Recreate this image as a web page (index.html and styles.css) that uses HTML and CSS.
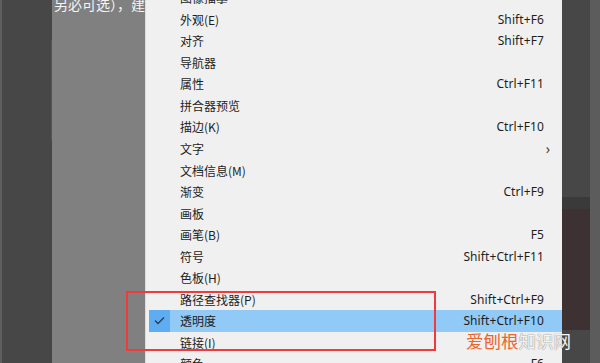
FILE: index.html
```html
<!DOCTYPE html>
<html lang="zh-CN">
<head>
    <meta charset="UTF-8">
    <title>窗口菜单</title>
    <link rel="stylesheet" href="styles.css">
</head>
<body>

<!-- 左侧工具栏 -->
<div class="edge"></div>
<div class="dock"><div class="dock-line"></div></div>

<!-- 画布区域 -->
<div class="canvas">
    <p class="canvas-text">另必可选），建立</p>
</div>

<!-- 窗口菜单 -->
<ul class="menu">
    <li class="item"><span class="label">图像描摹</span></li>
    <li class="item"><span class="label">外观(E)</span><span class="key">Shift+F6</span></li>
    <li class="item"><span class="label">对齐</span><span class="key">Shift+F7</span></li>
    <li class="item"><span class="label">导航器</span></li>
    <li class="item"><span class="label">属性</span><span class="key">Ctrl+F11</span></li>
    <li class="item"><span class="label">拼合器预览</span></li>
    <li class="item"><span class="label">描边(K)</span><span class="key">Ctrl+F10</span></li>
    <li class="item"><span class="label">文字</span><span class="arrow">›</span></li>
    <li class="item"><span class="label">文档信息(M)</span></li>
    <li class="item"><span class="label">渐变</span><span class="key">Ctrl+F9</span></li>
    <li class="item"><span class="label">画板</span></li>
    <li class="item"><span class="label">画笔(B)</span><span class="key">F5</span></li>
    <li class="item"><span class="label">符号</span><span class="key">Shift+Ctrl+F11</span></li>
    <li class="item"><span class="label">色板(H)</span></li>
    <li class="item"><span class="label">路径查找器(P)</span><span class="key">Shift+Ctrl+F9</span></li>
    <li class="item active">
        <span class="check">
            <svg width="11" height="9" viewBox="0 0 11 9"><polyline points="1,4.5 4,7.5 10,1.5" fill="none" stroke="#2f3d4c" stroke-width="1.3"/></svg>
        </span>
        <span class="label">透明度</span><span class="key">Shift+Ctrl+F10</span>
    </li>
    <li class="item"><span class="label">链接(I)</span></li>
    <li class="item"><span class="label">颜色</span><span class="key">F6</span></li>
</ul>

<!-- 右侧背景 -->
<div class="backdrop">
    <div class="backdrop-dark">
        <div class="band"></div>
    </div>
    <div class="backdrop-edge"></div>
</div>

<!-- 标注框 -->
<div class="mark"></div>

<!-- 水印 -->
<div class="watermark"><span class="wm-a">爱刨根</span><span class="wm-b">知识网</span></div>

</body>
</html>
```

FILE: styles.css
```css
/* 全局 */
body {
    margin: 0;
    width: 600px;
    height: 363px;
    overflow: hidden;
    display: flex;
    position: relative;
    background: #474747;
    font-family: "Noto Sans", "Noto Sans CJK SC", sans-serif;
}

/* 左侧 */
.edge {
    width: 2px;
    background: #5e5e5e;
}
.dock {
    width: 50px;
    background: #474747;
    display: flex;
    justify-content: flex-end;
}
.dock-line {
    width: 1px;
    height: 100px;
    margin-top: 40px;
    background: #555555;
}
.canvas {
    width: 93px;
    background: #808080;
    overflow: hidden;
}
.canvas-text {
    margin: -6px 0 0 2px;
    white-space: nowrap;
    color: #f4f4f4;
    font-size: 14px;
    font-family: "Noto Sans CJK SC", sans-serif;
}

/* 菜单 */
.menu {
    list-style: none;
    margin: -13px 0 0;
    padding: 0 0 0 3px;
    width: 413px;
    background: #f0f0f0;
    border-left: 1px solid #dcdcdc;
    flex-shrink: 0;
}
.item {
    display: flex;
    align-items: center;
    height: 21.54px;
    padding: 0 18px 0 31px;
    color: #1e1e1e;
    font-size: 12px;
    position: relative;
}
.label {
    flex: 1;
    font-family: "Noto Sans CJK SC", sans-serif;
    font-size: 12px;
}
.key {
    font-family: "Noto Sans", sans-serif;
    font-size: 12px;
    letter-spacing: 0.1px;
}
.arrow {
    font-size: 14px;
    color: #444;
    margin-right: -6px;
}
.item.active {
    background: #91c9f7;
}
.check {
    position: absolute;
    left: 0;
    top: 0;
    width: 21px;
    height: 100%;
    background: #5eacf2;
    display: flex;
    align-items: center;
    justify-content: center;
}

/* 右侧 */
.backdrop {
    flex: 1;
    display: flex;
}
.backdrop-dark {
    width: 28px;
    background: #474747;
    padding-top: 197px;
}
.band {
    height: 133px;
    background: #3e3131;
    border-top: 12px solid #3a3a3a;
    box-sizing: border-box;
}
.backdrop-edge {
    flex: 1;
    background: #5c5c5c;
}

/* 红色标注 */
.mark {
    position: absolute;
    left: 126px;
    top: 291px;
    width: 306px;
    height: 56px;
    border: 2px solid #f23a3e;
}

/* 水印 */
.watermark {
    position: absolute;
    left: 466px;
    top: 331px;
    font-size: 17.5px;
    font-family: "Noto Sans CJK SC", sans-serif;
    line-height: 20px;
}
.wm-a {
    color: #e8652e;
}
.wm-b {
    color: #f4f4f4;
    text-shadow: 0 0 1px #555;
}
```
